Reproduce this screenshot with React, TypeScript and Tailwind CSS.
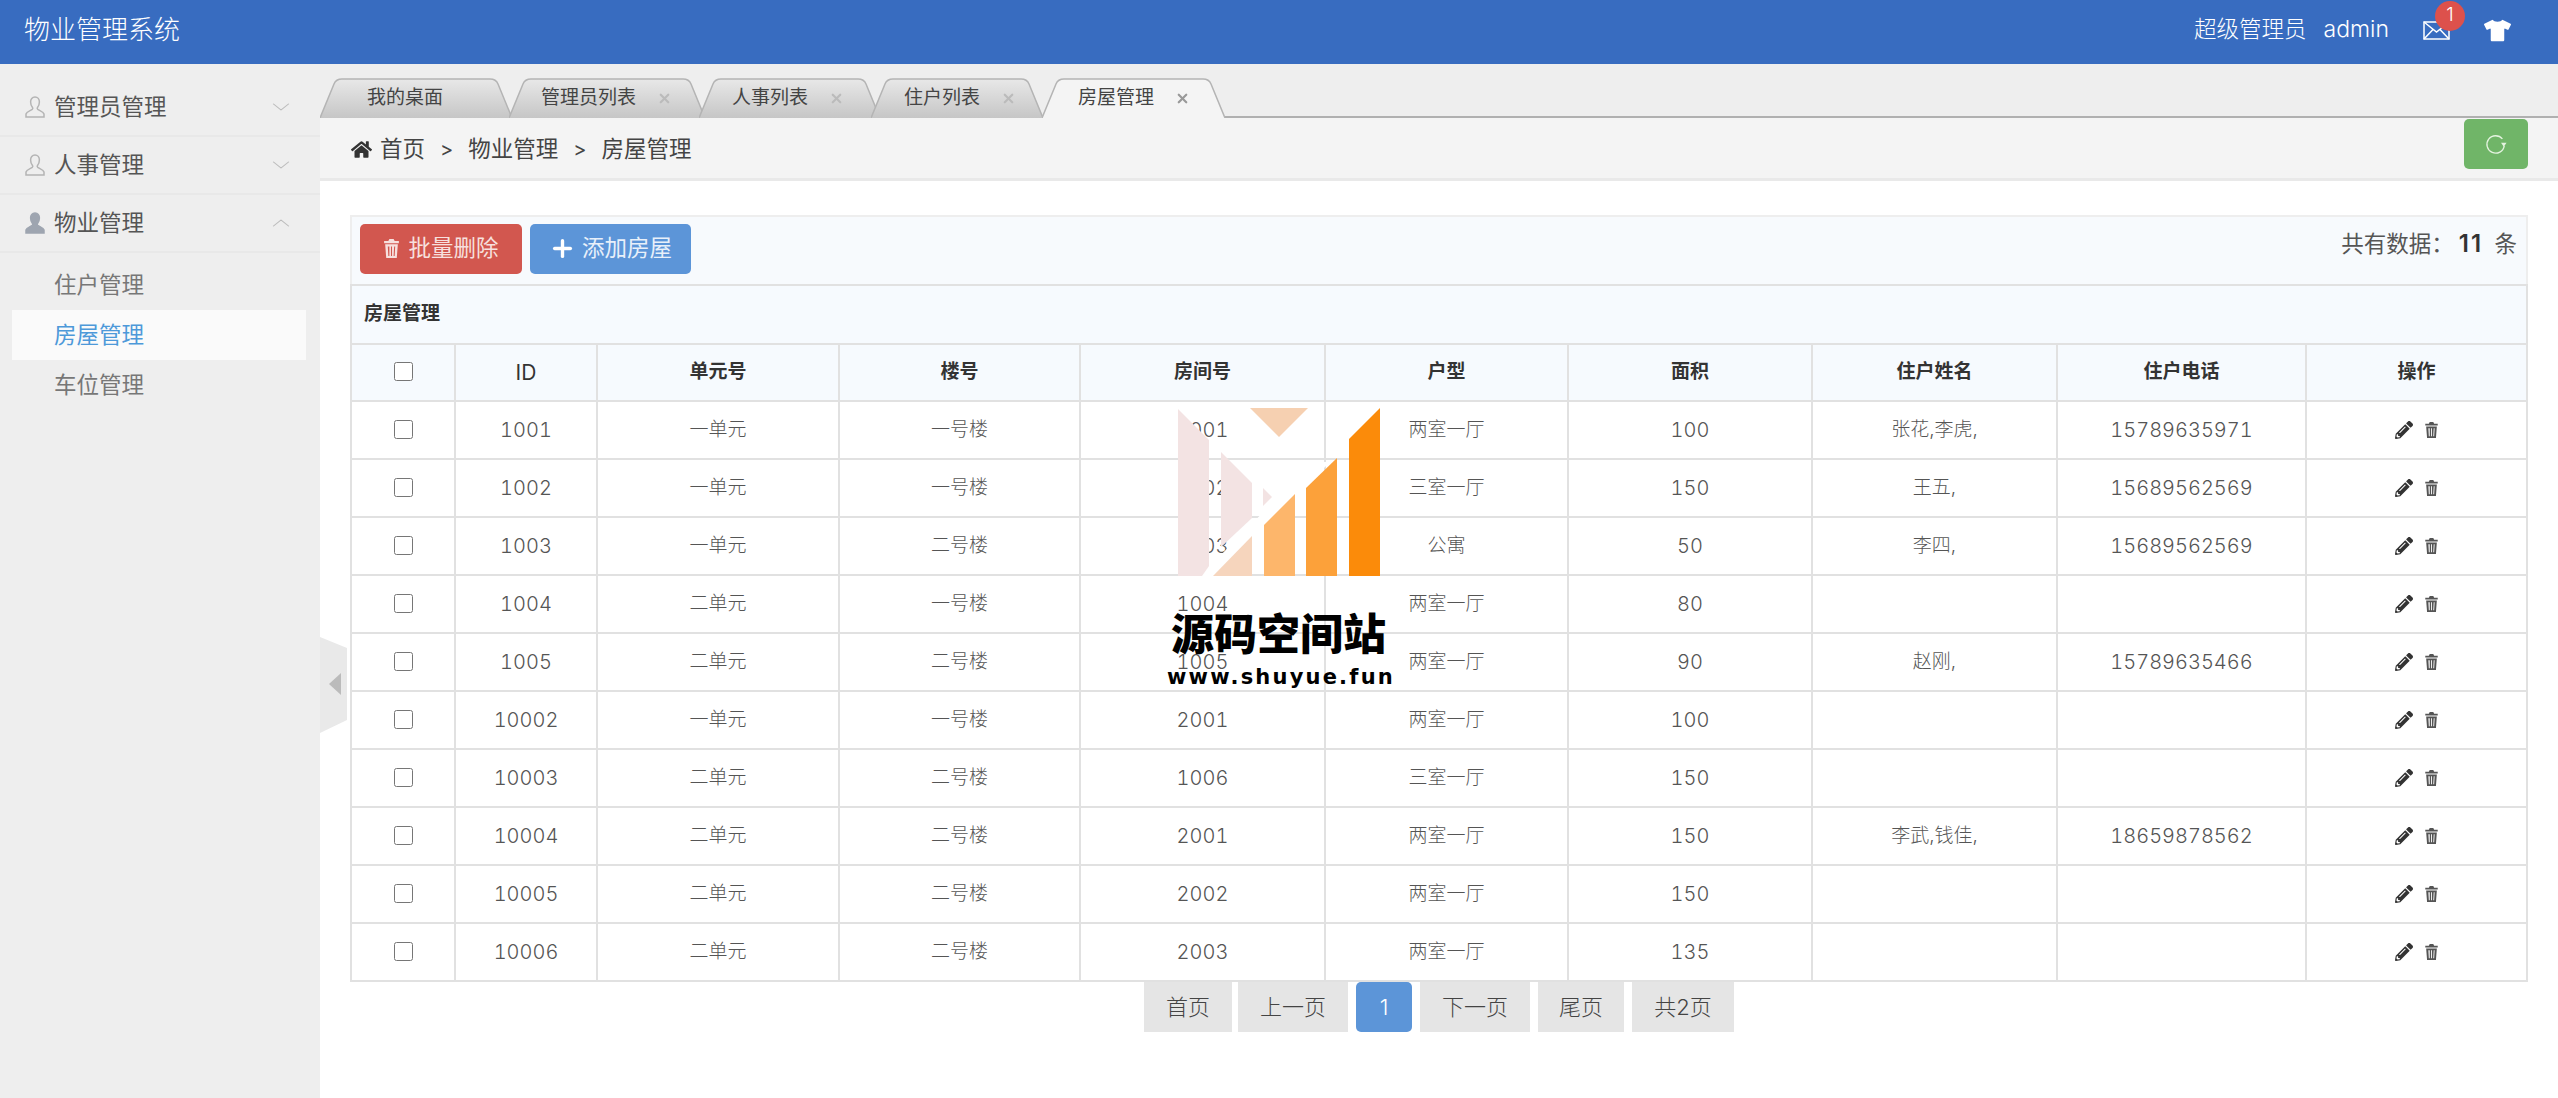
import React from 'react';
import { ChevronDown, ChevronUp, X, Plus } from 'lucide-react';
import { FaHome, FaPencilAlt, FaTshirt } from 'react-icons/fa';

const rows = [
    ['1001', '一单元', '一号楼', '1001', '两室一厅', '100', '张花,李虎,', '15789635971'],
    ['1002', '一单元', '一号楼', '1002', '三室一厅', '150', '王五,', '15689562569'],
    ['1003', '一单元', '二号楼', '1003', '公寓', '50', '李四,', '15689562569'],
    ['1004', '二单元', '一号楼', '1004', '两室一厅', '80', '', ''],
    ['1005', '二单元', '二号楼', '1005', '两室一厅', '90', '赵刚,', '15789635466'],
    ['10002', '一单元', '一号楼', '2001', '两室一厅', '100', '', ''],
    ['10003', '二单元', '二号楼', '1006', '三室一厅', '150', '', ''],
    ['10004', '二单元', '二号楼', '2001', '两室一厅', '150', '李武,钱佳,', '18659878562'],
    ['10005', '二单元', '二号楼', '2002', '两室一厅', '150', '', ''],
    ['10006', '二单元', '二号楼', '2003', '两室一厅', '135', '', ''],
];

const headers = ['单元号', '楼号', '房间号', '户型', '面积', '住户姓名', '住户电话', '操作'];

const tabs = [
    { label: '我的桌面', width: 192, left: 0, pad: 'pl-[47px]' },
    { label: '管理员列表', width: 196, left: -3, pad: 'pl-[32px]', close: true },
    { label: '人事列表', width: 181, left: -6, pad: 'pl-[33px]', close: true },
    { label: '住户列表', width: 172, left: -9, pad: 'pl-[33px]', close: true },
    { label: '房屋管理', width: 183, left: -1, pad: 'pl-[36px]', close: true, active: true },
];

// numbers take the larger size, chinese cells stay at 19px
const isNumeric = (v: string) => /^\d+$/.test(v);

function TrashIcon({ className }: { className?: string }) {
    return (
        <svg viewBox="0 0 16 18" className={className} fill="currentColor">
            <path d="M6 0h4l1 2h4v2H1V2h4z" />
            <path fillRule="evenodd" d="M2 5h12l-1 13H3zm2.500 2 .5 9h1V7zm3 0v9h1V7zm3 0-.5 9h1l.5-9z" />
        </svg>
    );
}

function UserIcon({ filled }: { filled?: boolean }) {
    return (
        <svg viewBox="0 0 20 22" className="w-5 h-[22px] shrink-0">
            <path
                d="M10 1c-2.800 0-4.400 2.200-4.400 5 0 2.200.9 4.200 1.900 5.400.4.600.3 1.500-.3 2C5.500 14.700 1.500 15.500 1 18v3h18v-3c-.5-2.500-4.500-3.300-6.200-4.600-.6-.5-.7-1.400-.3-2 1-1.200 1.900-3.200 1.900-5.400 0-2.800-1.600-5-4.400-5z"
                fill={filled ? '#9ea5b0' : 'none'}
                stroke={filled ? '#9ea5b0' : '#b4b4b4'}
                strokeWidth="1.500"
            />
        </svg>
    );
}

function MailIcon() {
    return (
        <svg viewBox="0 0 27 19" className="w-[27px] h-[19px]" fill="none" stroke="white" strokeWidth="1.500">
            <rect x="1" y="1" width="25" height="17" />
            <path d="M1 1l12.500 10L26 1M1 18l9-9.500M26 18l-9-9.500" />
        </svg>
    );
}

function RefreshIcon() {
    return (
        <svg viewBox="0 0 24 24" className="w-[22px] h-[22px]" fill="none">
            <path d="M19 6.500A9.500 9.500 0 1 0 21 14" stroke="#e4f3df" strokeWidth="1.400" />
            <path d="M17.500 10.500h6L20.500 15z" fill="#e4f3df" />
        </svg>
    );
}

function Tab({ label, width, left, pad, close, active }: any) {
    const fill = active ? '#f4f4f4' : 'url(#tabFill)';
    const d = `M0 40 L14 6 Q16 1 22 1 L${width - 22} 1 Q${width - 16} 1 ${width - 14} 6 L${width} 40`;
    return (
        <div className={`relative h-10 shrink-0 flex items-center ${pad} ${active ? 'z-10' : ''}`} style={{ width, marginLeft: left }}>
            <svg width={width} height={40} className="absolute inset-0">
                <path d={d} fill={fill} />
                <path d={d} fill="none" stroke="#b4b4b4" strokeWidth="1.500" />
            </svg>
            <span className="relative text-[19px] text-[#444]">{label}</span>
            {close && (
                <X size={15} strokeWidth={3.500} className={`relative ml-[21px] mt-px ${active ? 'text-[#999]' : 'text-[#bbb]'}`} />
            )}
        </div>
    );
}

function MenuHead({ label, open }: { label: string; open?: boolean }) {
    return (
        <div className="h-[58px] flex items-center pl-[25px] pr-[27px] border-b-2 border-[#e8e8e8] text-[22.500px] text-[#555]">
            <UserIcon filled={open} />
            <span className="ml-[9px] flex-1">{label}</span>
            {open ? (
                <ChevronUp size={24} strokeWidth={1} className="text-[#bbb] scale-x-125" />
            ) : (
                <ChevronDown size={24} strokeWidth={1} className="text-[#bbb] scale-x-125" />
            )}
        </div>
    );
}

function Cell({ children, className = '' }: { children?: React.ReactNode; className?: string }) {
    return <td className={`border-2 border-[#e1e1e1] text-center ${className}`}>{children}</td>;
}

export default function App() {
    return (
        <div className="w-[2558px] h-[1098px] overflow-hidden flex flex-col bg-white font-['Inter','Noto_Sans_CJK_SC',sans-serif]">
            <svg width="0" height="0" className="absolute">
                <defs>
                    <linearGradient id="tabFill" x1="0" y1="0" x2="0" y2="1">
                        <stop offset="0" stopColor="#e8e8e8" />
                        <stop offset="1" stopColor="#c6c6c6" />
                    </linearGradient>
                </defs>
            </svg>

            {/* header */}
            <header className="h-16 shrink-0 bg-[#386cc0] flex items-center pb-[6px] pl-6 pr-[47px] text-white">
                <span className="text-[26px] font-light">物业管理系统</span>
                <div className="ml-auto flex items-center text-[22.500px] font-light">
                    <span>超级管理员</span>
                    <span className="ml-[17px] text-[23px]">admin</span>
                    <div className="relative ml-[34px] mt-[2px] flex items-center">
                        <MailIcon />
                        <span className="absolute -top-[20px] left-[12px] w-[30px] h-[30px] rounded-full bg-[#dd514c] flex items-center justify-center text-[19px]">
                            1
                        </span>
                    </div>
                    <FaTshirt size={27} className="ml-[34px] mt-[2px]" />
                </div>
            </header>

            <div className="flex-1 flex min-h-0">
                {/* sidebar */}
                <aside className="w-[320px] shrink-0 bg-[#eeeeee] pt-[15px]">
                    <MenuHead label="管理员管理" />
                    <MenuHead label="人事管理" />
                    <MenuHead label="物业管理" open />
                    <ul className="pt-[7px] text-[22.500px] text-[#777]">
                        <li className="h-[50px] flex items-center pl-[54px]">住户管理</li>
                        <li className="h-[50px] flex items-center pl-[42px] ml-3 mr-[14px] bg-[#fafafa] text-[#4d99d9]">房屋管理</li>
                        <li className="h-[50px] flex items-center pl-[54px]">车位管理</li>
                    </ul>
                </aside>

                <main className="flex-1 min-w-0 relative">
                    {/* tab bar */}
                    <div className="h-[54px] bg-[#eeeeee] border-b-2 border-[#b0b0b0] pt-[14px] flex">
                        {tabs.map((t) => (
                            <Tab key={t.label} {...t} />
                        ))}
                    </div>

                    {/* breadcrumb */}
                    <div className="h-[63px] bg-[#f4f4f4] border-b-[3px] border-[#e9e9e9] pl-[31px] pr-[30px] flex items-center text-[22.500px] text-[#444]">
                        <FaHome size={21} className="text-[#333] mt-[2px]" />
                        <span className="ml-2 mt-[2px]">首页</span>
                        <span className="mx-[15px] mt-[2px] text-[20px]">&gt;</span>
                        <span className="mt-[2px]">物业管理</span>
                        <span className="mx-[15px] mt-[2px] text-[20px]">&gt;</span>
                        <span className="mt-[2px]">房屋管理</span>
                        <button className="ml-auto mt-[-8px] w-16 h-[50px] rounded-[5px] bg-[#70b568] flex items-center justify-center">
                            <RefreshIcon />
                        </button>
                    </div>

                    <div className="pl-[30px] pr-[30px] pt-[34px]">
                        {/* toolbar */}
                        <div className="h-[69px] bg-[#f7fafd] border-2 border-b-0 border-[#eeeeee] pl-[8px] pr-[9px] pt-[7px] flex text-[22.500px]">
                            <button className="w-[162px] h-[50px] pb-[2px] rounded-[5px] bg-[#d2574f] text-[#f7e0de] flex items-center justify-center gap-2">
                                <TrashIcon className="w-[17px] h-[19px]" />
                                批量删除
                            </button>
                            <button className="ml-[8px] w-[161px] h-[50px] pb-[2px] rounded-[5px] bg-[#5c95d8] text-[#e8f0fa] flex items-center justify-center gap-[6px]">
                                <Plus size={27} strokeWidth={3} className="text-white" />
                                添加房屋
                            </button>
                            <div className="ml-auto mt-[2px] text-[#555]">
                                共有数据：<span className="mx-[5px] text-[24px] tracking-[2px] font-semibold text-[#333]">11</span> 条
                            </div>
                        </div>

                        {/* table */}
                        <table className="w-[2176px] table-fixed border-collapse text-[19px] text-[#555] font-light">
                            <colgroup>
                                <col className="w-[104px]" />
                                <col className="w-[142px]" />
                                <col className="w-[242px]" />
                                <col className="w-[241px]" />
                                <col className="w-[245px]" />
                                <col className="w-[243px]" />
                                <col className="w-[244px]" />
                                <col className="w-[245px]" />
                                <col className="w-[249px]" />
                                <col className="w-[221px]" />
                            </colgroup>
                            <thead className="bg-[#f6fafe] text-[#333]">
                                <tr className="h-[59px]">
                                    <td colSpan={10} className="border-2 border-[#e1e1e1] pl-3 font-bold text-[19px]">
                                        房屋管理
                                    </td>
                                </tr>
                                <tr className="h-[57px]">
                                    <Cell>
                                        <input type="checkbox" className="block mx-auto mb-[2px] w-[19px] h-[19px]" readOnly />
                                    </Cell>
                                    <Cell className="text-[21px] font-normal">ID</Cell>
                                    {headers.map((h) => (
                                        <Cell key={h} className="font-bold">
                                            {h}
                                        </Cell>
                                    ))}
                                </tr>
                            </thead>
                            <tbody>
                                {rows.map((r) => (
                                    <tr key={r[0]} className="h-[58px]">
                                        <Cell>
                                            <input type="checkbox" className="block mx-auto mb-[2px] w-[19px] h-[19px]" readOnly />
                                        </Cell>
                                        {r.map((v, i) => (
                                            <Cell key={i} className={isNumeric(v) ? 'text-[20px] tabular-nums' : ''}>
                                                {v}
                                            </Cell>
                                        ))}
                                        <Cell>
                                            <div className="flex items-center justify-center gap-[11px] text-[#333]">
                                                <FaPencilAlt size={18} />
                                                <TrashIcon className="w-[15px] h-[16px] text-[#555]" />
                                            </div>
                                        </Cell>
                                    </tr>
                                ))}
                            </tbody>
                        </table>

                        {/* pagination */}
                        <div className="flex justify-center gap-2 text-[22px] text-[#444] font-light">
                            <div className="w-[88px] h-[50px] bg-[#e5e5e5] flex items-center justify-center">首页</div>
                            <div className="w-[110px] h-[50px] -ml-[2px] bg-[#e5e5e5] flex items-center justify-center">上一页</div>
                            <div className="w-[56px] h-[50px] rounded-[5px] bg-[#5c95d8] text-white flex items-center justify-center">1</div>
                            <div className="w-[110px] h-[50px] bg-[#e5e5e5] flex items-center justify-center">下一页</div>
                            <div className="w-[86px] h-[50px] bg-[#e5e5e5] flex items-center justify-center">尾页</div>
                            <div className="w-[102px] h-[50px] bg-[#e5e5e5] flex items-center justify-center">共2页</div>
                        </div>
                    </div>

                    {/* sidebar toggle */}
                    <svg viewBox="0 0 27 96" className="absolute left-0 top-[573px] w-[27px] h-[96px]">
                        <path d="M0 0l27 11v72L0 96z" fill="#e9e9e9" />
                        <path d="M9 47l12-11v22z" fill="#bbbbbb" />
                    </svg>

                    {/* watermark */}
                    <svg viewBox="0 0 220 185" className="absolute left-[850px] top-[336px] w-[220px] h-[185px]">
                        <path d="M30 176h16L160 62h-17z" fill="#ffffff" />
                        <path d="M8 9l31 31v126l-7 10H8z" fill="#f3e3e3" />
                        <path d="M51 52l31 31v35l-31 29z" fill="#f3e3e3" />
                        <path d="M93 88l9 9-9 9z" fill="#f3e3e3" />
                        <path d="M80 8h58l-29 29z" fill="#f6d0b1" />
                        <path d="M43 176l39-40v40z" fill="#f6d5bd" />
                        <path d="M94 125l31-31v82H94z" fill="#fdb66b" />
                        <path d="M136 88l31-30v118h-31z" fill="#fca13a" />
                        <path d="M179 39l31-31v168h-31z" fill="#fb8b0a" />
                    </svg>
                    <div className="absolute left-[851px] top-[545px] text-[43px] leading-[50px] font-black text-black whitespace-nowrap">
                        源码空间站
                    </div>
                    <div className="absolute left-[847px] top-[598px] text-[21px] leading-[30px] font-bold tracking-[2.200px] text-black whitespace-nowrap font-['DejaVu_Sans',sans-serif]">
                        www.shuyue.fun
                    </div>
                </main>
            </div>
        </div>
    );
}
